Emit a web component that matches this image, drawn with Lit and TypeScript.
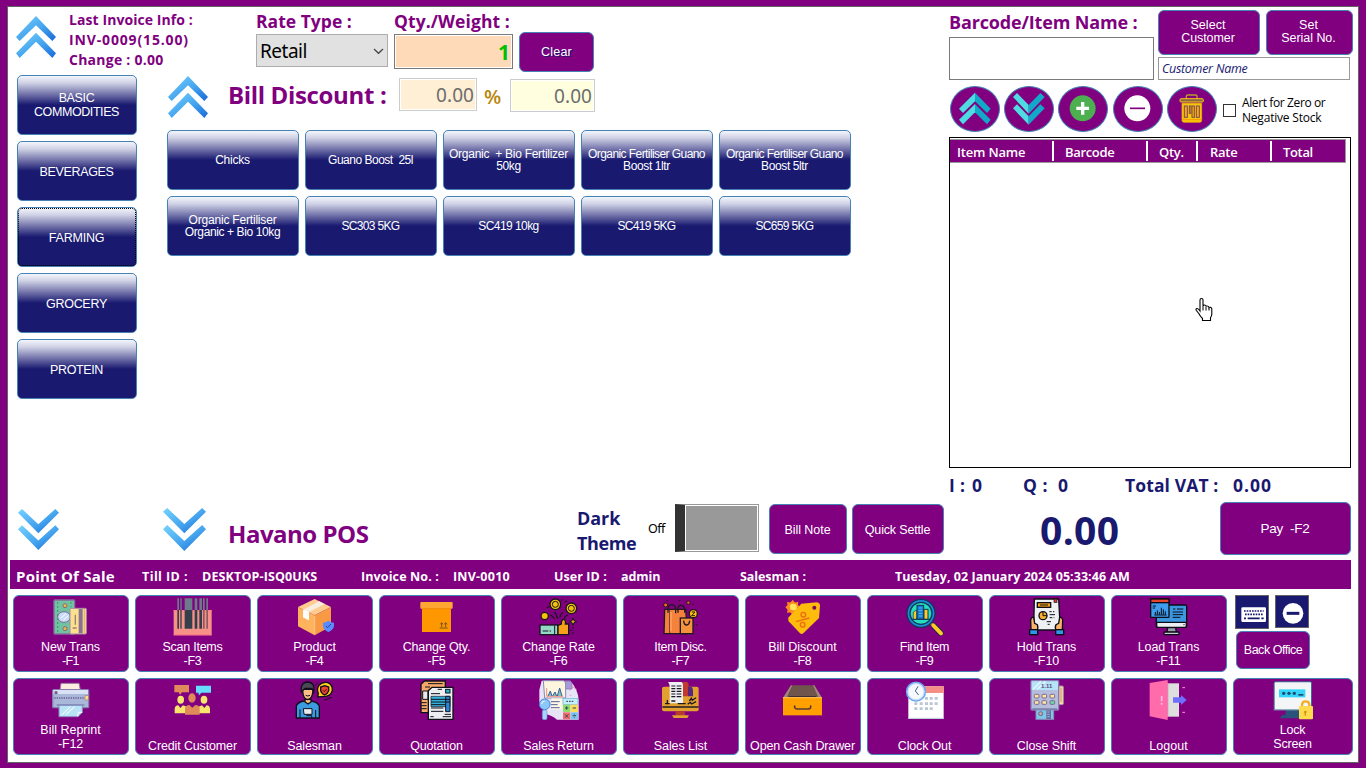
import { LitElement, html, svg, css } from "lit";
import { customElement, property } from "lit/decorators.js";

type Line = [string, number];

/* Text run tracked so that it fills a given width. */
@customElement("fit-text")
class FitText extends LitElement {
  @property({ type: Number }) w = 0;
  @property() text = "";
  static styles = css`
    :host { display: inline-block; white-space: pre; flex: none; }
  `;
  render() {
    return html`<span>${this.text}</span>`;
  }
  updated() {
    const s = this.renderRoot.querySelector("span") as HTMLElement;
    s.style.letterSpacing = "0px";
    const natural = s.getBoundingClientRect().width;
    if (this.w) s.style.letterSpacing = `${(this.w + 0.4 - natural) / this.text.length}px`;
  }
}

const t = (text: string, w: number, cls = "") =>
  html`<fit-text class=${cls} .text=${text} .w=${w}></fit-text>`;

const upShape = svg`
  <path d="M108 48L168 111L157 123L108 76L59 123L48 111Z"/>
  <path d="M108 98L168 160L157 174L108 125L59 174L48 160Z"/>`;
const downShape = svg`
  <path d="M54 68L66 57L115 103L166 57L177 68L115 130Z"/>
  <path d="M54 118L66 106L115 152L166 106L177 118L115 181Z"/>`;

const chevron = (dir: "up" | "down", size: string) => html`
  <svg class="chev ${size}" viewBox=${dir === "up" ? "48 48 120 126" : "54 57 123 124"} preserveAspectRatio="none">
    <defs>
      <linearGradient id="blue" x1="0" y1="0" x2="1" y2="1">
        <stop offset="0" stop-color="#76d3ff"/><stop offset="0.55" stop-color="#45a4ee"/><stop offset="1" stop-color="#1668d8"/>
      </linearGradient>
    </defs>
    <g fill="url(#blue)">${dir === "up" ? upShape : downShape}</g>
  </svg>`;

const icons = {
  money: svg`
    <rect x="162" y="30" width="62" height="102" rx="3" fill="#6fc3a0" stroke="#8a6a9c" stroke-width="4"/>
    <path d="M173 36V128M213 36V52" stroke="#3d8f80" stroke-width="3" stroke-dasharray="6 6"/>
    <circle cx="195" cy="47" r="6" fill="#f2b84b" stroke="#8a6a6c" stroke-width="3"/>
    <circle cx="195" cy="116" r="6" fill="#f2b84b" stroke="#8a6a6c" stroke-width="3"/>
    <ellipse cx="192" cy="81" rx="19" ry="16" fill="#c8dcf6" stroke="#7d6a9c" stroke-width="3"/>
    <path d="M182 85L198 71M190 91L205 77" stroke="#fff" stroke-width="3"/>
    <rect x="210" y="55" width="49" height="77" rx="3" fill="#fbe08e" stroke="#a58aa8" stroke-width="3"/>
    <rect x="236" y="57" width="12" height="73" fill="#8b7096"/>
    <path d="M226 74V104M218 114H230" stroke="#a08070" stroke-width="4"/>
    <path d="M253 57V130" stroke="#e6b870" stroke-width="4"/>`,
  scan: svg`
    <rect x="521" y="60" width="114" height="76" fill="#f79289"/>
    <path d="M521 60H635V64H521ZM521 132H635V136H521Z" fill="#ff7b85"/>
    <g fill="#6b7b8c"><path d="M532 25h5v35h-5zM541 25h4v35h-4zM554 25h23v35h-23zM584 25h8v35h-8zM598 25h8v35h-8zM609 25h5v35h-5zM619 25h5v35h-5z"/></g>
    <g fill="#343f4b"><path d="M532 60h5v56h-5zM541 60h4v56h-4zM554 60h23v56h-23zM584 60h8v56h-8zM598 60h8v56h-8z"/></g>
    <path d="M609 60h5v56h-5zM619 60h5v56h-5z" fill="#8a5a60"/>`,
  product: svg`
    <path d="M194 27L243 51L194 76L144 51Z" fill="#ffcb8e"/>
    <path d="M144 51L194 76V136L144 109Z" fill="#ffb35c"/>
    <path d="M243 51L194 76V136L243 109Z" fill="#f79a43"/>
    <path d="M194 78V134" stroke="#ffcb8e" stroke-width="3"/>
    <path d="M159 59L208 34L224 42L177 66V91L159 82Z" fill="#f7ece0"/>
    <path d="M159 59L177 66V91L159 82Z" fill="#fff"/>
    <path d="M235 92Q243 98 252 98V108Q250 120 235 126Q221 120 219 108V98Q228 98 235 92Z" fill="#5b8cff"/>
    <path d="M228 108L233 113L243 102" fill="none" stroke="#27409c" stroke-width="3"/>`,
  box: svg`
    <rect x="516" y="54" width="87" height="72" fill="#ff9800"/>
    <rect x="511" y="36" width="97" height="20" rx="3" fill="#ffa733"/>
    <path d="M516 56H603" stroke="#e68200" stroke-width="2"/>
    <path d="M575 111V100M571 103L575 98L579 103M587 111V100M583 103L587 98L591 103M569 114H593" fill="none" stroke="#5c4326" stroke-width="2.5"/>`,
  rate: svg`
    <g stroke="#1a1420" stroke-width="4" fill="#f4c20d">
      <circle cx="181" cy="43" r="16"/><circle cx="229" cy="55" r="16"/><circle cx="149" cy="78" r="11"/>
    </g>
    <g fill="none" stroke="#1a1420" stroke-width="3"><circle cx="181" cy="43" r="9"/><circle cx="229" cy="55" r="9"/></g>
    <path d="M187 86Q187 74 178 66M194 84Q196 72 204 66M165 74Q174 78 179 87M207 86Q211 76 219 75M155 54L164 49M198 31L203 29M210 36L216 32" fill="none" stroke="#1a1420" stroke-width="3.5"/>
    <path d="M234 84L237 92L245 95L237 98L234 106L231 98L223 95L231 92Z" fill="#d9a520" stroke="#1a1420" stroke-width="3"/>
    <rect x="135" y="105" width="54" height="29" fill="#94d8c8" stroke="#1a1420" stroke-width="4"/>
    <path d="M189 106L199 102Q199 88 206 88Q213 89 211 102H221V134H189Z" fill="#f5a11a" stroke="#1a1420" stroke-width="4"/>
    <path d="M179 107V132M143 123H160M164 123H168M234 111V117M234 126V132M226 121H232" stroke="#1a1420" stroke-width="3"/>`,
  bags: svg`
    <g stroke="#231722" stroke-width="4">
      <path d="M509 58H572L578 131H507Z" fill="#f5823c"/>
      <path d="M524 131V60" stroke-width="2"/>
      <path d="M519 68V56Q520 44 530 44Q541 44 542 57V70M549 68V54Q552 44 560 46Q568 48 569 58V68" fill="none"/>
      <rect x="556" y="84" width="38" height="47" fill="#f5923c"/>
      <path d="M566 92Q567 105 575 105Q583 104 584 92" fill="none"/>
      <circle cx="512" cy="45" r="6" fill="#ff6a13" stroke-width="3"/><circle cx="580" cy="38" r="5" fill="#ff6a13" stroke-width="3"/>
      <circle cx="595" cy="71" r="12" fill="#ffc60a"/>
      <path d="M590 66H600L590 77H600M602 103L608 105M514 32H518M552 32H556M591 43H596" fill="none" stroke-width="3"/>
    </g>
    <path d="M528 66V124" stroke="#ffa05c" stroke-width="5"/>`,
  tag: svg`
    <g fill="#ff8a1e"><circle cx="158" cy="52" r="17"/><path d="M158 29L165 38L175 35L174 45L181 52L174 59L175 69L165 67L158 76L151 67L141 69L143 59L136 52L143 45L141 35L151 38Z"/></g>
    <circle cx="160" cy="51" r="10" fill="#ffe45c"/>
    <path d="M184 41L231 37Q240 39 240 47L237 84L190 130Q185 134 180 130L146 94Q142 89 146 82Z" fill="#fdbb0c"/>
    <circle cx="160" cy="51" r="10" fill="#ffe45c"/>
    <circle cx="223" cy="53" r="6" fill="#7a0a60"/>
    <g fill="none" stroke="#ef6c12" stroke-width="4"><circle cx="190" cy="74" r="7"/><circle cx="188" cy="104" r="7"/><path d="M168 95L208 84"/></g>`,
  find: svg`
    <path d="M570 98L580 107" stroke="#ef9b10" stroke-width="7"/>
    <path d="M582 108L602 129" stroke="#142a4a" stroke-width="17" stroke-linecap="round"/>
    <path d="M580 106L603 130" stroke="#ffc925" stroke-width="12" stroke-linecap="round"/>
    <circle cx="543" cy="70" r="42" fill="#1b8fd6" stroke="#14365c" stroke-width="4"/>
    <circle cx="543" cy="70" r="33" fill="#25e0bd" stroke="#14365c" stroke-width="4"/>
    <path d="M520 66L530 60V88H520Z" fill="#ffca28" stroke="#14365c" stroke-width="2"/>
    <rect x="531" y="46" width="20" height="42" fill="#1478c8" stroke="#14365c" stroke-width="3"/>
    <path d="M536 54H547M536 62H547M536 70H547M536 78H547" stroke="#4cc4ff" stroke-width="3"/>
    <rect x="552" y="58" width="12" height="30" fill="#ffca28" stroke="#14365c" stroke-width="3"/>
    <path d="M515 88H570" stroke="#14365c" stroke-width="3"/>`,
  hold: svg`
    <g stroke="#0d0d16" stroke-width="4">
      <path d="M151 27H224L229 120H149Z" fill="#eef0f3"/>
      <rect x="160" y="38" width="40" height="14" fill="#f8a11f"/>
      <path d="M168 45H192M196 65H203M207 65H211M197 74H213M197 83H205M209 83H211M188 95H201M191 103H197" stroke-width="3"/>
      <circle cx="177" cy="77" r="12" fill="#f8b02f"/><path d="M177 77V66M177 77H189" stroke-width="3"/>
      <rect x="210" y="27" width="9" height="10" fill="#db3a2c" stroke-width="2"/>
      <path d="M141 121L140 90Q142 80 149 82L152 100L160 104Q164 113 158 123Z" fill="#f9b36b"/>
      <path d="M235 121L236 90Q234 80 227 82L224 100L216 104Q211 113 218 123Z" fill="#f9b36b"/>
      <rect x="137" y="119" width="24" height="15" fill="#2f97e8"/><rect x="215" y="119" width="24" height="15" fill="#2f97e8"/>
    </g>`,
  load: svg`
    <g stroke="#0d0d16" stroke-width="4">
      <rect x="517" y="45" width="91" height="67" rx="4" fill="#3c97e0"/>
      <path d="M518 97H607V109Q606 112 602 112H523Q518 112 518 108Z" fill="#eceef2"/>
      <path d="M551 113H575L577 127H549Z" fill="#9aa0aa"/><rect x="540" y="126" width="45" height="8" rx="2" fill="#c6cad2"/>
      <rect x="500" y="27" width="55" height="55" rx="2" fill="#3f9df0"/>
      <rect x="500" y="27" width="55" height="11" fill="#e8432c"/>
      <path d="M514 74V66M520 74V61M526 74V66M532 74V53M538 74V58M544 74V64M511 75H548M506 48H516M506 54H513M567 57H574M579 57H598M566 66H597M566 74H597M566 82H589" fill="none" stroke-width="3"/>
    </g>
    <path d="M598 104H602" stroke="#333" stroke-width="3"/>`,
  printer: svg`
    <path d="M183 280H237L241 300H180Z" fill="#fdeee0" stroke="#9a7aa0" stroke-width="3"/>
    <rect x="158" y="299" width="108" height="54" rx="3" fill="#a9b8d8" stroke="#8a7ab0" stroke-width="4"/>
    <path d="M160 300H264V312H160Z" fill="#d8e2f4"/>
    <circle cx="168" cy="308" r="5" fill="#7a5a90"/><rect x="255" y="317" width="10" height="13" fill="#ffd98c" stroke="#a08080" stroke-width="2"/>
    <path d="M163 324H252" stroke="#6e5a9a" stroke-width="4" stroke-dasharray="4 3"/>
    <path d="M170 345H253" stroke="#6f7fb0" stroke-width="4"/>
    <path d="M177 346H247V367L234 380H177Z" fill="#b8e4f6" stroke="#8a8ac0" stroke-width="3"/>
    <path d="M184 376L211 350M198 373L224 350M233 379L235 367H246" fill="none" stroke="#fff" stroke-width="3"/>`,
  people: svg`
    <path d="M523 285H567V307H546L540 314L536 307H523Z" fill="#e08a5c"/>
    <path d="M588 287H633V308H604L597 316L595 308H588Z" fill="#66dcff"/>
    <g fill="#f8e56c"><ellipse cx="542" cy="329" rx="10" ry="12"/><ellipse cx="612" cy="329" rx="10" ry="12"/>
    <path d="M524 370V356Q526 346 535 346L541 354L549 346L560 350V370ZM630 370V356Q628 346 620 346L613 354L606 346L596 350V370Z"/></g>
    <path d="M555 374V355Q558 345 568 345L577 353L586 345Q597 345 599 355V374Z" fill="#e08a5c"/>
    <ellipse cx="576" cy="324" rx="11" ry="14" fill="#e08a5c"/>`,
  salesman: svg`
    <g stroke="#10101a" stroke-width="4">
      <path d="M139 384V347Q145 335 163 333H184Q205 337 208 349V384Z" fill="#3b9ae0"/>
      <path d="M165 328H183V336L174 342L165 336Z" fill="#f5b27a"/>
      <path d="M158 298Q158 318 165 325Q173 332 181 325Q189 317 189 297Z" fill="#f9bd85"/>
      <path d="M154 306Q150 277 173 276Q196 277 191 306L186 295H165Z" fill="#4b4a56"/>
      <path d="M203 321L205 310Q199 297 207 286Q217 275 233 278Q248 284 247 301Q242 318 226 319Q215 320 203 321Z" fill="#ffd31f"/>
      <path d="M224 287L236 291V302Q233 311 224 315Q214 311 212 302V291Z" fill="#ef4130"/>
      <path d="M219 301L223 305L230 297" fill="none" stroke-width="2.5"/>
      <path d="M160 356H186V373H162Z" fill="#e9edf2" stroke-width="3"/><path d="M150 383V358M197 383V360M169 377H185V383M167 316Q173 320 180 316M194 288L204 277M222 331L245 322" fill="none" stroke-width="3"/>
    </g>`,
  quote: svg`
    <g stroke="#10101a" stroke-width="4">
      <path d="M523 273H586V368H513V283Z" fill="#f6a96a"/><path d="M534 281H578M525 291H540M518 303H534V328H518Z" fill="#e8e8ea" stroke-width="3"/>
      <path d="M514 338H530M514 347H530M514 356H530" stroke-width="3"/>
      <path d="M546 292H609V388H535V302Z" fill="#eceef2"/>
      <path d="M543 319H600V350H543Z" fill="#35b3dc" stroke-width="2"/>
      <path d="M587 319H600V365H587Z" fill="#2c86d8" stroke-width="3"/>
      <rect x="587" y="298" width="13" height="11" fill="#25b6d8" stroke-width="3"/>
      <path d="M563 298H576M543 311H570M543 328H600M543 336H600M543 344H585M543 354H580M543 364H580M541 380H551M578 380H603M584 373H603" stroke-width="3"/>
    </g>`,
  ret: svg`
    <path d="M140 272H226Q250 300 251 330V389H186Q170 375 150 372L133 335V300Z" fill="#e7e4f8"/>
    <path d="M211 273H226Q232 278 231 297H211Z" fill="#a99bd8" stroke="#7868ac" stroke-width="2"/>
    <path d="M145 272H205Q212 273 212 282V324H149Z" fill="#fdf6df" stroke="#8886b8" stroke-width="3"/>
    <path d="M159 318L166 303L171 318M173 318L180 306L185 318M187 318L194 294L201 318" fill="#7cc8bc" stroke="#3d5a9c" stroke-width="3"/>
    <path d="M155 294V319H205" fill="none" stroke="#e85c5c" stroke-width="2"/>
    <rect x="170" y="325" width="32" height="33" fill="#fff8e4"/><path d="M168 335H194M168 344H188M168 353H194" stroke="#56609c" stroke-width="3"/>
    <rect x="204" y="325" width="45" height="18" fill="#c0eefa" stroke="#6ab6d0" stroke-width="2"/><path d="M214 334H238" stroke="#334" stroke-width="3" stroke-dasharray="5 3"/>
    <rect x="204" y="344" width="22" height="22" fill="#8edc6c"/><rect x="227" y="344" width="22" height="22" fill="#f8dc5c"/>
    <rect x="204" y="367" width="22" height="21" fill="#f36b6b"/><rect x="227" y="367" width="22" height="21" fill="#7cc6ee"/>
    <path d="M210 354H220M215 349V359M233 354H243M210 373L220 383M220 373L210 383M233 377H243M238 371V373M238 381V383" stroke="#345" stroke-width="3"/>
    <circle cx="149" cy="343" r="16" fill="#8cc8fa" stroke="#4682d8" stroke-width="3"/><path d="M140 342Q141 334 149 333" fill="none" stroke="#fff" stroke-width="3"/>
    <rect x="142" y="360" width="14" height="29" rx="5" fill="#a9d4fb" stroke="#6a98d8" stroke-width="2"/>
    <path d="M224 316H229M224 302L232 290L246 299" stroke="#e87ba0" stroke-width="2" fill="none"/>`,
  list: svg`
    <rect x="501" y="290" width="110" height="74" rx="6" fill="#e2a02e"/>
    <path d="M502 351H611" stroke="#241b26" stroke-width="4"/>
    <path d="M543 364H568L572 377H540Z" fill="#b83a2e"/><path d="M531 376H582L577 384H536Z" fill="#e2a02e"/>
    <path d="M562 276H576Q582 279 581 290V319H562Z" fill="#c2392d"/><path d="M579 290H590Q594 295 594 304V319H579Z" fill="#56287e"/>
    <path d="M519 276H560Q565 279 564 288V340H524V290Q524 281 519 276Z" fill="#eef0f3"/>
    <g stroke="#1d1722" stroke-width="4"><path d="M529 288H541M545 288H559M529 296H541M545 296H559M529 304H541M545 304H559M529 312H541M545 312H559M529 320H541M545 320H559" stroke-width="3.5"/>
    <path d="M517 330V342M510 341H524M583 333L589 325L592 331L603 323M578 343L586 337L590 342L603 335M529 333H541M548 341H572" fill="none"/></g>`,
  drawer: svg`
    <path d="M153 286H223L245 324H130Z" fill="#6f554b"/>
    <path d="M153 286L130 322H140L157 286ZM219 286L235 322H245L223 286Z" fill="#a0887c"/>
    <path d="M147 318H228V322H147Z" fill="#3c2f2e"/>
    <rect x="129" y="321" width="117" height="55" fill="#ffa000"/><path d="M129 321H246V325H129Z" fill="#ffb74d"/>
    <path d="M164 348V352Q165 357 172 357H203Q211 357 212 352V348" fill="none" stroke="#5b3a32" stroke-width="5" stroke-linecap="round"/>`,
  clock: svg`
    <rect x="505" y="289" width="106" height="98" fill="#fff"/><rect x="505" y="289" width="106" height="20" fill="#f58f86"/>
    <path d="M505 385H611" stroke="#b9c6dc" stroke-width="3"/>
    <g fill="#b9c6d4"><path d="M555 321h9v8h-9zM569 321h9v8h-9zM584 321h9v8h-9zM539 337h9v8h-9zM555 337h9v8h-9zM569 337h9v8h-9zM584 337h9v8h-9zM523 337h9v8h-9zM523 352h9v8h-9zM539 352h9v8h-9zM555 352h9v8h-9zM569 352h9v8h-9z"/></g>
    <circle cx="528" cy="305" r="28" fill="#f6fafe" stroke="#6ea7f0" stroke-width="5"/>
    <circle cx="528" cy="305" r="24" fill="none" stroke="#c5dcfa" stroke-width="3"/>
    <path d="M534 289L526 303L536 315" fill="none" stroke="#4c5c7c" stroke-width="3"/>`,
  shift: svg`
    <rect x="224" y="288" width="14" height="56" rx="3" fill="#ffe0a0" stroke="#a08aa8" stroke-width="3"/><path d="M231 293V337" stroke="#c08a70" stroke-width="3"/>
    <rect x="141" y="272" width="83" height="88" rx="3" fill="#b5bddd" stroke="#8a7ab4" stroke-width="4"/>
    <rect x="143" y="274" width="79" height="26" fill="#b6e3f8"/><path d="M147 298L171 274M160 298L184 274" stroke="#e6f8ff" stroke-width="4"/>
    <text x="171" y="293" font-size="18" font-family="Liberation Sans" font-weight="700" fill="#5c4a78">1.11</text>
    <g fill="#ffe49c" stroke="#7c6890" stroke-width="3"><rect x="151" y="313" width="14" height="11" rx="3"/><rect x="174" y="313" width="14" height="11" rx="3"/><rect x="198" y="313" width="14" height="11" rx="3"/><rect x="151" y="332" width="14" height="11" rx="3"/><rect x="174" y="332" width="14" height="11" rx="3"/><rect x="198" y="332" width="14" height="11" rx="3" fill="#6cd8a4"/></g>
    <path d="M145 357H219" stroke="#7078a4" stroke-width="4"/>
    <rect x="156" y="360" width="53" height="28" fill="#7cc8ea" stroke="#8a8ab8" stroke-width="3"/><rect x="187" y="361" width="14" height="26" fill="#6a6c98"/>
    <path d="M190 366H197M190 373H197M190 380H197" stroke="#c4d4f0" stroke-width="2"/><circle cx="170" cy="371" r="6" fill="#c8a89c" stroke="#6c6490" stroke-width="3"/>`,
  logout: svg`
    <rect x="548" y="280" width="37" height="100" fill="#dedede"/><path d="M548 280H553V380H548Z" fill="#b9a8b8"/>
    <path d="M497 279L551 270V390L497 379Z" fill="#ff6bab"/>
    <path d="M533 318V334M533 339V344" stroke="#ffc0dc" stroke-width="5"/>
    <path d="M567 322H591V315L608 330L591 345V338H567Z" fill="#6e6eff"/>
    <path d="M595 293H603M595 367H603" stroke="#ff9cc8" stroke-width="3"/>`,
  lock: svg`
    <path d="M318 358H362L366 374H380V385H301Q300 375 316 374Z" fill="#29527c"/>
    <rect x="281" y="274" width="115" height="87" rx="6" fill="#3c6e95"/><rect x="284" y="277" width="109" height="81" rx="3" fill="#f4f5f6"/>
    <path d="M281 358H396V361H281Z" fill="#9fb4c8"/>
    <rect x="297" y="298" width="79" height="24" fill="#35d6fb"/>
    <g fill="#234a6e"><circle cx="311" cy="310" r="5"/><circle cx="327" cy="310" r="5"/><circle cx="343" cy="310" r="5"/><path d="M355 312H370V317H355Z"/></g>
    <path d="M366 350V344Q367 334 377 334Q387 334 388 344V350" fill="none" stroke="#f4ae24" stroke-width="7"/>
    <rect x="357" y="348" width="42" height="40" rx="3" fill="#fedb4c"/>
    <circle cx="376" cy="366" r="4" fill="#e08a1c"/><path d="M376 366V377" stroke="#e08a1c" stroke-width="4"/>`,
};

interface Action { icon: keyof typeof icons; x: number; y: number; lines: Line[]; wide?: boolean }

const rowOne: Action[] = [
  { icon: "money", x: 153, y: 21, lines: [["New Trans", 58.7], ["-F1", 16.5]] },
  { icon: "scan", x: 519, y: 21, lines: [["Scan Items", 59.7], ["-F3", 17.5]] },
  { icon: "product", x: 135, y: 21, lines: [["Product", 42.3], ["-F4", 17.5]] },
  { icon: "box", x: 501, y: 21, lines: [["Change Qty.", 67.3], ["-F5", 17.5]] },
  { icon: "rate", x: 132, y: 21, lines: [["Change Rate", 72.3], ["-F6", 17.5]] },
  { icon: "bags", x: 498, y: 21, lines: [["Item Disc.", 52], ["-F7", 17.5]] },
  { icon: "tag", x: 129, y: 21, lines: [["Bill Discount", 68], ["-F8", 17.5]] },
  { icon: "find", x: 495, y: 21, lines: [["Find Item", 49], ["-F9", 17.5]] },
  { icon: "hold", x: 129, y: 21, lines: [["Hold Trans", 59], ["-F10", 25]] },
  { icon: "load", x: 495, y: 21, lines: [["Load Trans", 61.3], ["-F11", 24]] },
];
const rowTwo: Action[] = [
  { icon: "printer", x: 153, y: 270, lines: [["Bill Reprint", 60], ["-F12", 24.5]] },
  { icon: "people", x: 519, y: 270, lines: [["Credit Customer", 88.5]] },
  { icon: "salesman", x: 135, y: 270, lines: [["Salesman", 54]] },
  { icon: "quote", x: 501, y: 270, lines: [["Quotation", 52]] },
  { icon: "ret", x: 132, y: 270, lines: [["Sales Return", 70]] },
  { icon: "list", x: 498, y: 270, lines: [["Sales List", 53]] },
  { icon: "drawer", x: 129, y: 270, lines: [["Open Cash Drawer", 104.5]] },
  { icon: "clock", x: 495, y: 270, lines: [["Clock Out", 53]] },
  { icon: "shift", x: 129, y: 270, lines: [["Close Shift", 59]] },
  { icon: "logout", x: 495, y: 270, lines: [["Logout", 38]] },
  { icon: "lock", x: 279, y: 270, lines: [["Lock", 25], ["Screen", 38]], wide: true },
];

const categories: Line[][] = [
  [["BASIC", 35.3], ["COMMODITIES", 84.7]],
  [["BEVERAGES", 73.7]],
  [["FARMING", 55]],
  [["GROCERY", 60.5]],
  [["PROTEIN", 52.5]],
];
const products: Line[][] = [
  [["Chicks", 34.3]],
  [["Guano Boost  25l", 84.5]],
  [["Organic  + Bio Fertilizer", 118.5], ["50kg", 24]],
  [["Organic Fertiliser Guano", 116.5], ["Boost 1ltr", 46.5]],
  [["Organic Fertiliser Guano", 116.5], ["Boost 5ltr", 46.5]],
  [["Organic Fertiliser", 87.5], ["Organic + Bio 10kg", 95]],
  [["SC303 5KG", 57.5]],
  [["SC419 10kg", 60]],
  [["SC419 5KG", 57.5]],
  [["SC659 5KG", 57.5]],
];

@customElement("app-root")
class AppRoot extends LitElement {
  static styles = css`
    :host { display: block; width: 1366px; height: 768px; position: relative; overflow: hidden; }
    * { box-sizing: border-box; }
    svg { display: block; overflow: hidden; flex: none; }
    .frame { width: 1366px; height: 768px; padding: 6px 7px 5px; background: #800080; font-family: "Open Sans", "Noto Sans", sans-serif; color: #800080; }
    .window { height: 757px; border: 1px solid #646464; background: #fff; }
    .upper { display: grid; grid-template-columns: 941px 409px; height: 553px; }
    .left { display: grid; grid-template-rows: 65px 428px 60px; }
    .navy { color: #191970; }

    .head { display: grid; grid-template-columns: 61px 187px 138px 125px 75px; }
    .chev.s { width: 40px; height: 42px; }
    .chev.d1 { width: 41px; height: 41px; }
    .chev.d2 { width: 43px; height: 43px; }
    .head .chev { margin: 9px 0 0 8px; }
    .info { display: flex; flex-direction: column; padding-top: 3px; font-size: 14px; line-height: 20px; font-weight: 700; }
    .field { display: flex; flex-direction: column; align-items: flex-start; }
    .label { font-size: 17.5px; line-height: 27px; height: 27px; font-weight: 700; padding-top: 1px; }
    .combo { width: 132px; height: 33px; border: 1px solid #adadad; background: #e1e1e1; color: #000; font-size: 19px; display: flex; align-items: center; justify-content: space-between; padding: 1px 3px 0 3px; font-family: "Noto Sans", sans-serif; }
    .qty { width: 119px; height: 35px; border: 1px solid #7a7a7a; box-shadow: inset 0 0 0 1px #fff; background: #ffdab9; color: #00c000; font-size: 21px; font-weight: 700; display: flex; align-items: center; justify-content: flex-end; padding: 1px 2px 0 0; }
    .btn { display: flex; flex-direction: column; align-items: center; justify-content: center; background: #800080; border: 1px solid #4682b4; border-radius: 6px; color: #fff; font: 12.5px/13px "Liberation Sans", Arial, sans-serif; flex: none; }
    .clear { width: 75px; height: 40px; margin-top: 25px; text-shadow: 1px 1px 0 #191970; }

    .body { display: grid; grid-template-columns: 129px 1fr; }
    .cats { display: flex; flex-direction: column; gap: 6px; padding: 3px 0 0 9px; }
    .grad { background: linear-gradient(#f4f6fc 0, #cfd1e5 12%, #191970 50%); height: 60px; border-radius: 5px; line-height: 14px; padding-right: 1px; }
    .cats .grad { padding-top: 1px; }
    .cats .grad.two { padding: 0 1px 1px 0; }
    .focus { outline: 1px dotted #000; outline-offset: -2px; }
    .mid { padding: 3px 0 0 26px; }
    .disc { display: flex; height: 55px; padding-left: 5px; }
    .disc > * { flex: none; }
    .disc .chev { margin-top: 1px; }
    .title { font-size: 24px; line-height: 40px; font-weight: 700; margin: 0 0 0 20px; width: 171px; }
    .num { height: 33px; border: 1px solid #ccc; box-shadow: inset 0 0 0 1px #fff; color: #6d6d6d; font: 19px "Noto Sans", sans-serif; display: flex; align-items: center; justify-content: flex-end; padding-right: 2px; }
    .pct { width: 78px; background: #ffefd5; margin-top: 3px; }
    .amt { width: 85px; background: #ffffe0; margin-top: 4px; }
    .sign { color: #b8860b; font-size: 20px; font-weight: 600; line-height: 40px; width: 33px; padding: 2px 0 0 7px; }
    .grid { display: grid; grid-template-columns: repeat(5, 132px); gap: 6px; padding-left: 4px; }
    .prod { font-size: 12px; line-height: 12px; padding-bottom: 1px; }

    .foot { display: flex; align-items: flex-start; padding-left: 10px; }
    .foot .d1 { margin-top: 9px; }
    .foot .d2 { margin: 8px 0 0 104px; }
    .brand { font-size: 24px; font-weight: 700; line-height: 30px; margin: 19px 0 0 22px; width: 349px; }
    .dark { display: flex; flex-direction: column; font-size: 18px; line-height: 25px; font-weight: 700; margin-top: 6px; width: 71px; }
    .off { color: #000; font: 12.5px/16px "Noto Sans", sans-serif; margin-top: 21px; width: 27px; }
    .toggle { width: 84px; height: 48px; margin-top: 4px; border: 1px solid #999; border-left: 10px solid #333; background: #999; box-shadow: inset 0 0 0 1px #fff; flex: none; }
    .note { width: 78px; height: 50px; margin: 4px 5px 0 10px; padding: 2px 1px 0 0; }
    .settle { width: 92px; height: 50px; margin-top: 4px; padding: 2px 1px 0 0; }

    .right { display: flex; flex-direction: column; }
    .find { display: grid; grid-template-columns: 209px 1fr; height: 73px; }
    .entry { width: 205px; height: 43px; border: 1px solid #7a7a7a; background: #fff; }
    .find .label { height: 30px; line-height: 28px; font-size: 18px; }
    .pair { display: flex; gap: 6px; padding-top: 3px; height: 50px; }
    .cust { width: 102px; height: 45px; padding: 0 2px 1px 0; }
    .serial { width: 87px; height: 45px; padding: 0 2px 1px 0; }
    .name { width: 192px; height: 23px; border: 1px solid #999; font-size: 12.5px; font-style: italic; display: flex; align-items: center; padding: 0 0 1px 3px; }
    .tools { display: flex; padding: 6px 0 0 1px; height: 57px; }
    .round { width: 50px; height: 46px; border-radius: 50%; border: 1px solid #4682b4; background: #800080; margin-right: 4px; flex: none; }
    .round svg { margin: -1px; }
    .round.far { margin-left: 1px; }
    .check { width: 13px; height: 13px; border: 1px solid #333; margin: 18px 6px 0 2px; }
    .alert { color: #000; font-size: 12px; font-weight: 500; line-height: 15px; padding-top: 9px; display: flex; flex-direction: column; }
    .table { width: 402px; height: 331px; border: 1px solid #000; padding-top: 1px; flex: none; }
    .thead { display: grid; grid-template-columns: 104px 94px 50px 74px 73px; width: 396px; height: 24px; background: #800080; border: solid #999; border-width: 1px 1px 1px 0; color: #fff; font-size: 13px; font-weight: 600; padding: 1px 0; }
    .thead div { border-right: 2px solid #fff; line-height: 22px; height: 20px; padding-left: 11px; }
    .thead div:first-child { padding-left: 7px; }
    .thead div:nth-child(4) { padding-left: 12px; }
    .thead div:last-child { border: 0; }
    .stats { display: grid; grid-template-columns: 23px 51px 35px 67px 108px 1fr; font-size: 17.5px; font-weight: 700; line-height: 34px; height: 34px; }
    .total { display: flex; justify-content: space-between; padding-left: 91px; width: 402px; }
    .big { font-size: 39px; line-height: 56px; font-weight: 700; }
    .pay { width: 131px; height: 53px; font-size: 13.5px; padding-right: 1px; }

    .status { display: grid; grid-template-columns: 126px 60px 159px 92px 101px 67px 119px 155px 1fr; width: 1341px; height: 29px; margin-left: 2px; padding-left: 6px; background: #800080; color: #fff; font-size: 12.5px; line-height: 33px; font-weight: 700; }
    .pos { font-size: 15px; }
    .lower { display: grid; grid-template-columns: repeat(10, 116px) 120px; column-gap: 6px; row-gap: 6px; padding: 6px 0 0 5px; }
    .act { width: 116px; height: 77px; line-height: 14px; justify-content: flex-start; padding-top: 1px; }
    .act.wide { width: 120px; }
    .act svg { width: 40px; height: 40px; }
    .act .txt { flex: 1; display: flex; flex-direction: column; align-items: center; justify-content: flex-end; padding: 0 1px 3px 0; }
    .act .txt.one { padding-bottom: 1px; }
    .side { padding-left: 2px; }
    .keys { display: flex; gap: 6px; }
    .key { width: 34px; height: 34px; background: #191970; border: 1px solid #646464; }
    .key.min { height: 33px; }
    .back { width: 74px; height: 38px; margin: 2px 0 0 1px; }
    .cursor { position: absolute; left: 1194px; top: 297px; }
  `;

  private lines(ls: Line[]) {
    return ls.map(([s, w]) => t(s, w));
  }

  private action(a: Action) {
    return html`<div class="btn act ${a.wide ? "wide" : ""}">
      <svg viewBox="${a.x} ${a.y} 120 120">${icons[a.icon]}</svg>
      <div class="txt ${a.lines.length === 1 ? "one" : ""}">${this.lines(a.lines)}</div>
    </div>`;
  }

  private round(x: number, art: unknown, far = false) {
    return html`<div class="round ${far ? "far" : ""}"><svg width="50" height="46" viewBox="${x} 258 150 138">${art}</svg></div>`;
  }

  private tools() {
    return html`<div class="tools">
      ${this.round(60, svg`
        <g fill="#4fdbe2"><path d="M135 278V304L99 339L87 326Z"/><path d="M135 312V337L99 373L87 359Z"/></g>
        <g fill="#12a8ca"><path d="M135 278V304L171 339L182 326Z"/><path d="M135 312V337L171 373L182 359Z"/></g>`)}
      ${this.round(222, svg`
        <g fill="#4fdbe2"><path d="M296 341V315L261 279L249 291Z"/><path d="M296 374V349L261 313L249 325Z"/></g>
        <g fill="#12a8ca"><path d="M296 341V315L331 279L344 291Z"/><path d="M296 374V349L331 313L344 325Z"/></g>`)}
      ${this.round(384, svg`
        <circle cx="458" cy="325" r="39" fill="#4caf50"/><path d="M453 306H463V320H477V330H463V344H453V330H439V320H453Z" fill="#fff"/>`)}
      ${this.round(549, svg`
        <circle cx="622" cy="325" r="39" fill="#fff"/><path d="M600 325H645" stroke="#800080" stroke-width="5"/>`, true)}
      ${this.round(711, svg`
        <path d="M769 297V288Q769 285 773 285H797Q801 285 801 288V297" fill="none" stroke="#b59a2c" stroke-width="4"/>
        <rect x="750" y="296" width="70" height="10" rx="3" fill="#8f6a3c" stroke="#f0c419" stroke-width="3"/>
        <path d="M756 310H815V361Q815 367 809 367H762Q756 367 756 361Z" fill="#f5c60a" stroke="#f0b400" stroke-width="2"/>
        <g fill="#ffa600" stroke="#7a4a5c" stroke-width="3"><rect x="763" y="318" width="9" height="34"/><rect x="778" y="318" width="5" height="22"/><rect x="786" y="318" width="7" height="34"/><rect x="799" y="318" width="9" height="34"/></g>
        <path d="M758 359H813" stroke="#ff9800" stroke-width="3"/>`)}
      <div class="check"></div>
      <div class="alert">${t("Alert for Zero or", 83)}${t("Negative Stock", 79)}</div>
    </div>`;
  }

  render() {
    return html`
      <div class="frame"><div class="window">
        <div class="upper">
          <div class="left">
            <div class="head">
              ${chevron("up", "s")}
              <div class="info">${t("Last Invoice Info :", 123.5)}${t("INV-0009(15.00)", 119.5)}${t("Change : 0.00", 94)}</div>
              <div class="field">
                <div class="label">${t("Rate Type :", 95.5)}</div>
                <div class="combo">${t("Retail", 46.5)}
                  <svg width="11" height="7" viewBox="0 0 11 7"><path d="M1 1L5.5 5.3L10 1" fill="none" stroke="#444" stroke-width="1.2"/></svg></div>
              </div>
              <div class="field">
                <div class="label">${t("Qty./Weight :", 115.5)}</div>
                <div class="qty">1</div>
              </div>
              <div class="btn clear">${t("Clear", 30.5)}</div>
            </div>
            <div class="body">
              <div class="cats">
                ${categories.map((c, i) => html`<div class="btn grad ${c.length > 1 ? "two" : ""} ${i === 2 ? "focus" : ""}">${this.lines(c)}</div>`)}
              </div>
              <div class="mid">
                <div class="disc">
                  ${chevron("up", "s")}
                  <div class="title">${t("Bill Discount :", 158)}</div>
                  <div class="num pct">${t("0.00", 37.5)}</div>
                  <div class="sign">%</div>
                  <div class="num amt">${t("0.00", 37.5)}</div>
                </div>
                <div class="grid">
                  ${products.map((p) => html`<div class="btn grad prod">${this.lines(p)}</div>`)}
                </div>
              </div>
            </div>
            <div class="foot">
              ${chevron("down", "d1")}${chevron("down", "d2")}
              <div class="brand">${t("Havano POS", 140)}</div>
              <div class="dark navy">${t("Dark", 43)}${t("Theme", 59)}</div>
              <div class="off">${t("Off", 16.5)}</div>
              <div class="toggle"></div>
              <div class="btn note">${t("Bill Note", 45.7)}</div>
              <div class="btn settle">${t("Quick Settle", 65)}</div>
            </div>
          </div>
          <div class="right">
            <div class="find">
              <div>
                <div class="label">${t("Barcode/Item Name :", 188)}</div>
                <div class="entry"></div>
              </div>
              <div>
                <div class="pair">
                  <div class="btn cust">${t("Select", 34.7)}${t("Customer", 53)}</div>
                  <div class="btn serial">${t("Set", 18.5)}${t("Serial No.", 54)}</div>
                </div>
                <div class="name navy">${t("Customer Name", 85)}</div>
              </div>
            </div>
            ${this.tools()}
            <div class="table">
              <div class="thead">
                <div>${t("Item Name", 68)}</div><div>${t("Barcode", 49)}</div><div>${t("Qty.", 24.5)}</div><div>${t("Rate", 27)}</div><div>${t("Total", 29.5)}</div>
              </div>
            </div>
            <div class="stats navy">${t("I :", 16)}${t("0", 10.5)}${t("Q :", 24.5)}${t("0", 10.5)}${t("Total VAT :", 93)}${t("0.00", 38.5)}</div>
            <div class="total">
              <div class="big navy">${t("0.00", 79)}</div>
              <div class="btn pay">${t("Pay  -F2", 48.5)}</div>
            </div>
          </div>
        </div>
        <div class="status">
          ${t("Point Of Sale", 98.5, "pos")}${t("Till ID :", 45.5)}${t("DESKTOP-ISQ0UKS", 115)}${t("Invoice No. :", 77.5)}${t("INV-0010", 56.5)}${t("User ID :", 52.5)}${t("admin", 39)}${t("Salesman :", 65.5)}${t("Tuesday, 02 January 2024 05:33:46 AM", 234.5)}
        </div>
        <div class="lower">
          ${rowOne.map((a) => this.action(a))}
          <div class="side">
            <div class="keys">
              <div class="key"><svg width="32" height="32" viewBox="168 18 96 96">
                <rect x="184" y="52" width="74" height="44" rx="4" fill="#fff"/>
                <path d="M192 63H251M195 73H249" stroke="#191970" stroke-width="5" stroke-dasharray="5 3"/>
                <path d="M192 85H198M203 85H239M244 85H251" stroke="#191970" stroke-width="5"/></svg></div>
              <div class="key min"><svg width="32" height="31" viewBox="288 18 96 93">
                <circle cx="339" cy="70" r="31" fill="#fff"/><path d="M320 70H358" stroke="#191970" stroke-width="9"/></svg></div>
            </div>
            <div class="btn back">${t("Back Office", 58)}</div>
          </div>
          ${rowTwo.map((a) => this.action(a))}
        </div>
      </div></div>
      <svg class="cursor" width="20" height="26" viewBox="0 0 20 26">
        <path d="M6 14V3Q6 1.5 7.5 1.5Q9 1.5 9 3V9Q9 8 10.4 8Q11.9 8 12 9.5Q12.2 8.8 13.4 9Q14.8 9.2 15 10.6Q15.4 10 16.4 10.3Q17.8 10.7 17.8 12V17Q17.8 19 16.5 20.5V23.5H8.5V21.5Q6 19 4.8 16.5L2.2 13.3Q1.6 12 2.8 11.5Q4 11 6 14Z" fill="#fff" stroke="#000" stroke-width="1.1"/>
        <path d="M9 9V13.5M12 10V13.5M15 11V13.5" stroke="#000"/>
      </svg>`;
  }
}
